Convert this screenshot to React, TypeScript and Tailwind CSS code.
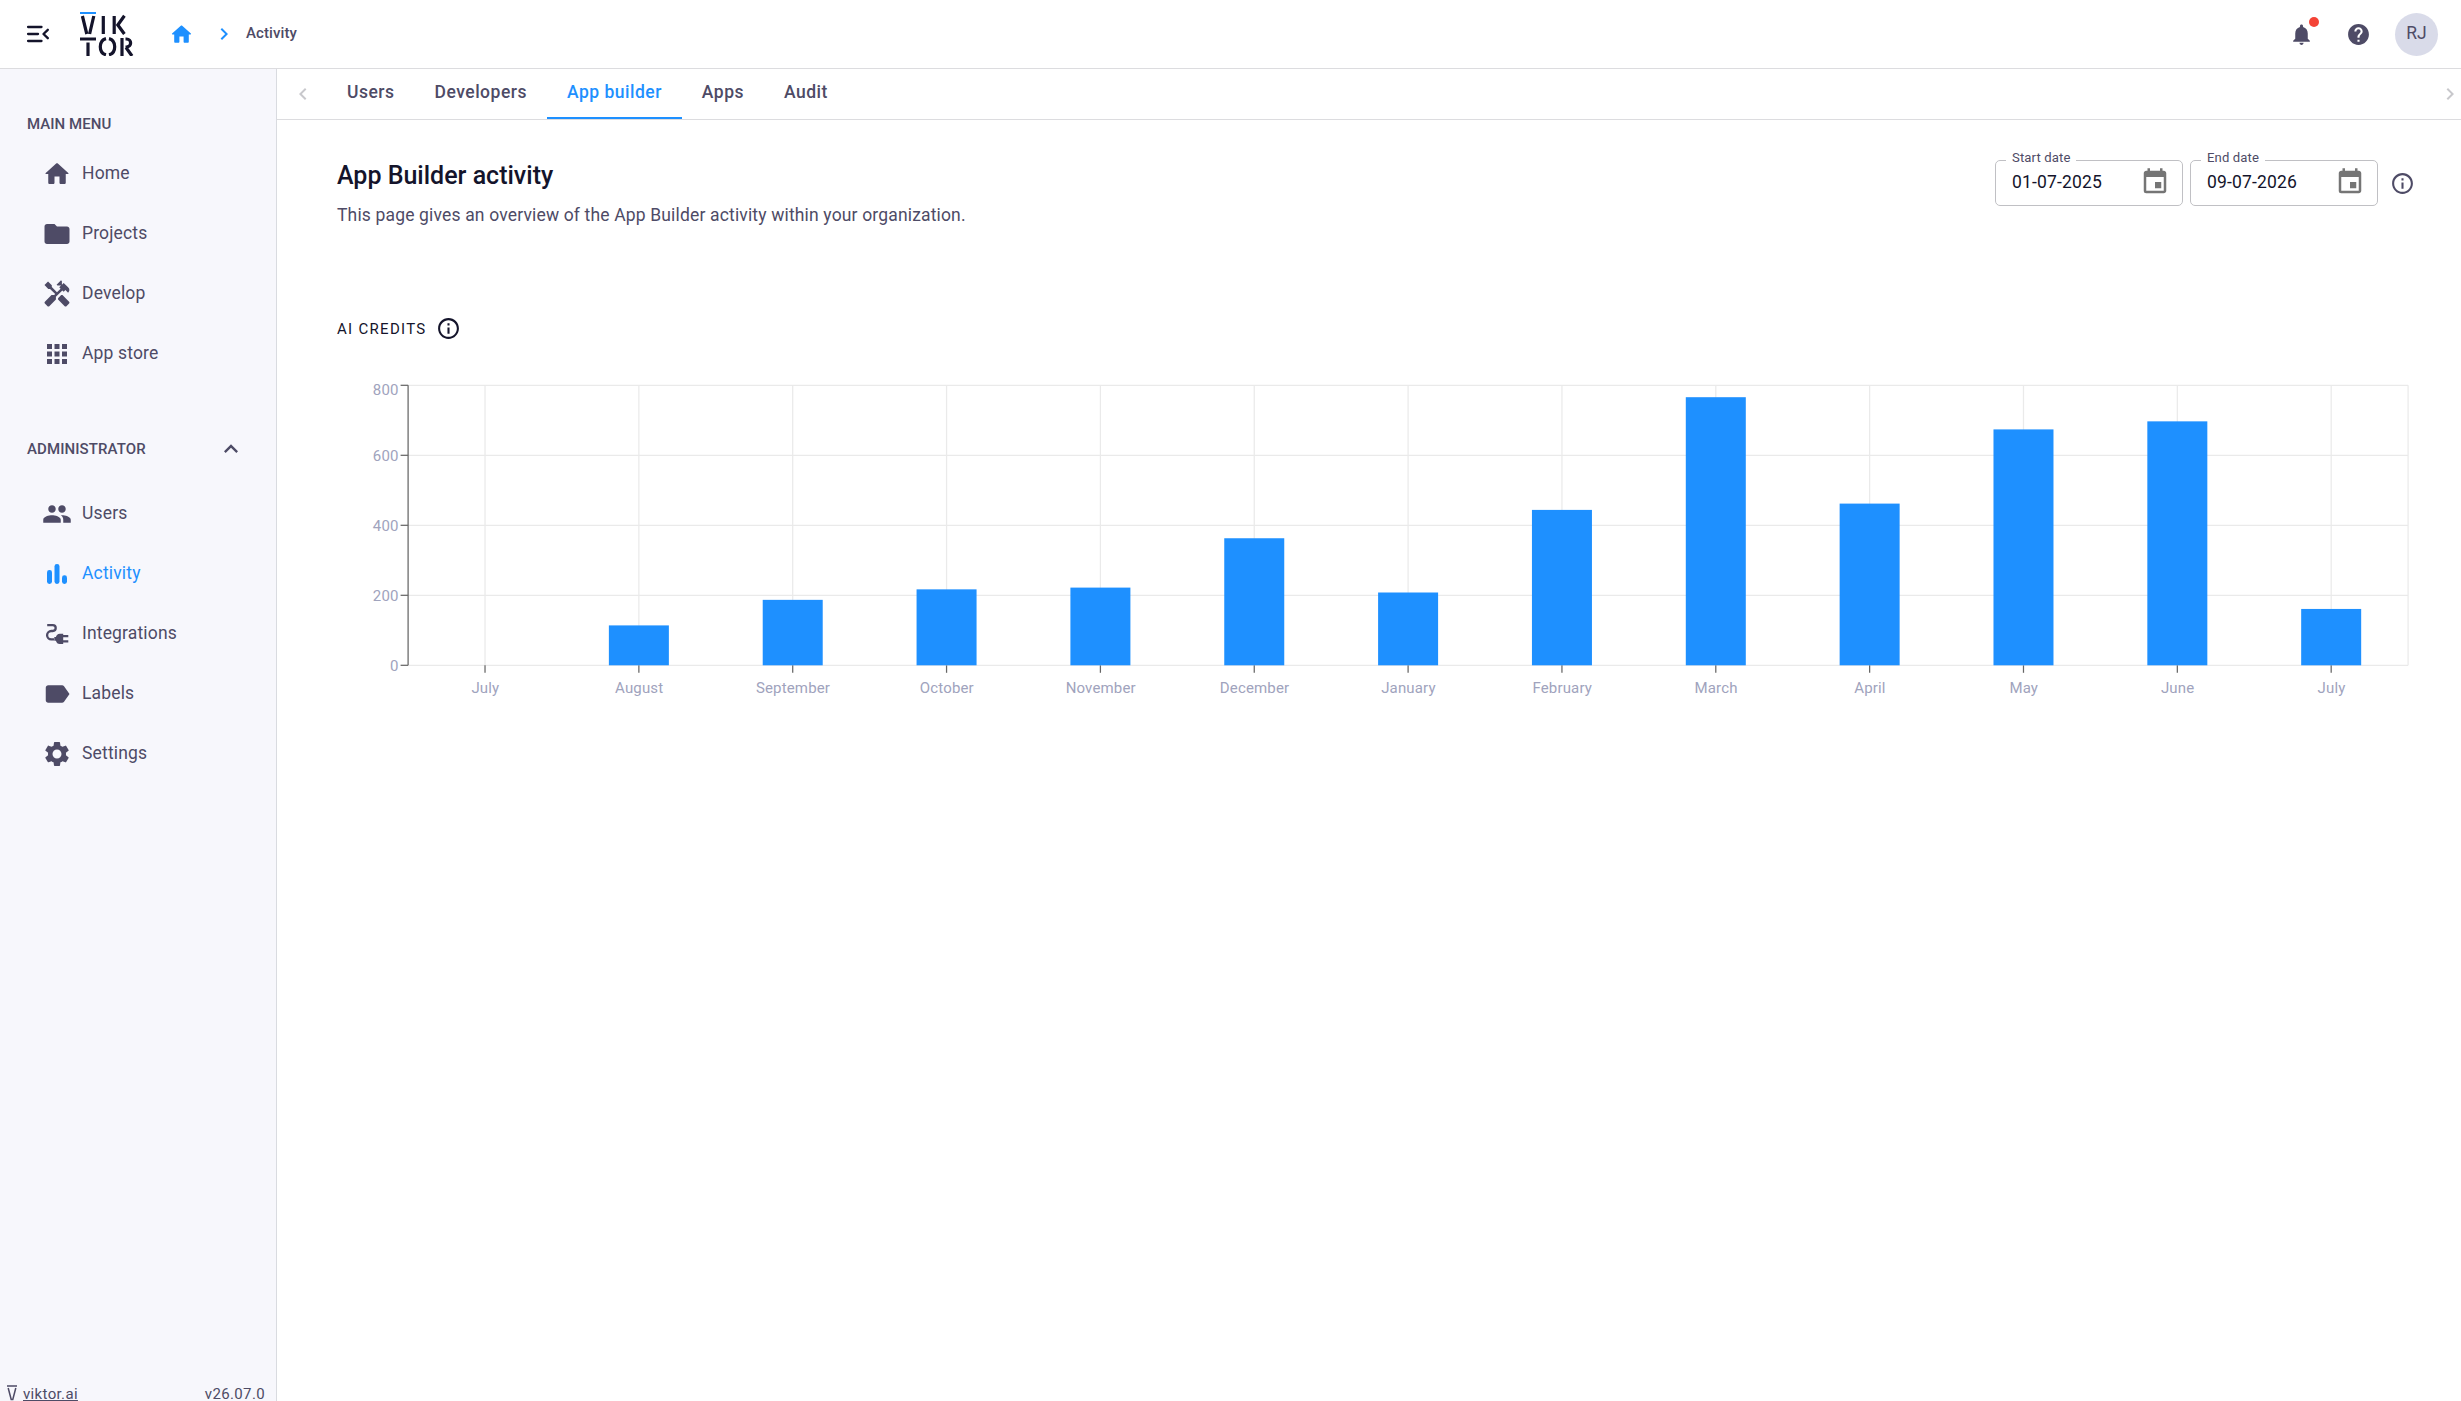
import React from "react";
import {
  MdApps,
  MdChevronLeft,
  MdChevronRight,
  MdEvent,
  MdExpandLess,
  MdFolder,
  MdHandyman,
  MdHelp,
  MdLabel,
  MdNotifications,
  MdOutlineInfo,
  MdPeople,
  MdSettings,
} from "react-icons/md";
import { clsx } from "clsx";

const MenuIcon = () => (
  <svg width="28" height="28" viewBox="0 0 24 24" fill="none" stroke="currentColor" strokeWidth="2" strokeLinecap="round" strokeLinejoin="round">
    <path d="M3.5 6H15M3.5 12H12M3.5 18H15M20.4 8.4 16.7 12l3.7 3.6" />
  </svg>
);

const HomeIcon = ({ size, className }: { size: number; className?: string }) => (
  <svg width={size} height={size} viewBox="0 0 24 24" fill="currentColor" className={className}>
    <path d="M10 19v-5h4v5c0 .55.45 1 1 1h3c.55 0 1-.45 1-1v-7h1.700c.46 0 .68-.57.33-.87L12.670 3.600c-.38-.34-.96-.34-1.340 0l-8.360 7.530c-.34.3-.13.87.33.87H5v7c0 .55.45 1 1 1h3c.55 0 1-.45 1-1z" />
  </svg>
);

const Logo = () => (
  <svg width="54" height="44" viewBox="0 0 54 44" fill="none" stroke="#14142b" strokeWidth="3.2">
    <path d="M0 1h16" stroke="#1e90ff" strokeWidth="2" />
    <path d="M2.4 4l4.4 18M13.8 4L9.6 22" />
    <path d="M23.3 4v18M34.2 4v18M44.4 3.8L37.8 13l6.6 9" />
    <path d="M0 27h16" strokeWidth="3" />
    <path d="M8 30.5V44" />
    <path d="M26 26.6c-7.6 2-7.6 14.4 0 16.2M29 26.6c7.6 2 7.6 14.4 0 16.2" />
    <path d="M42 26v18M45.5 27h1c5.5 0 5.5 8 0 8h-1M46 35.5l6 8.5" />
  </svg>
);

const ChartIcon = () => (
  <svg width="30" height="30" viewBox="0 0 30 30" fill="currentColor">
    <rect x="5" y="11" width="5" height="14" rx="2.4" />
    <rect x="12.5" y="5" width="5" height="20" rx="2.4" />
    <rect x="20" y="16.3" width="5" height="8.7" rx="2.4" />
  </svg>
);

const PlugIcon = () => (
  <svg width="30" height="30" viewBox="0 0 30 30" fill="none" stroke="currentColor" strokeWidth="2.3">
    <path d="M5.2 6.2h5.6a2.9 2.9 0 0 1 0 5.8H9.3a4.2 4.2 0 0 0 0 8.4h2.7" />
    <path d="M12.3 18h1.6c.5-2 1.8-3.3 3.9-3.3h3.4V25h-3.4c-2.1 0-3.4-1.3-3.9-3.3h-1.6z" fill="currentColor" stroke="none" />
    <path d="M21 17.2h5.3M21 22.4h5.3" />
  </svg>
);

interface NavItem {
  label: string;
  icon: React.ReactNode;
  active?: boolean;
}

const mainMenu: NavItem[] = [
  { label: "Home", icon: <HomeIcon size={30} /> },
  { label: "Projects", icon: <MdFolder size={30} /> },
  { label: "Develop", icon: <MdHandyman size={30} /> },
  { label: "App store", icon: <MdApps size={30} /> },
];

const adminMenu: NavItem[] = [
  { label: "Users", icon: <MdPeople size={30} /> },
  { label: "Activity", icon: <ChartIcon />, active: true },
  { label: "Integrations", icon: <PlugIcon /> },
  { label: "Labels", icon: <MdLabel size={30} /> },
  { label: "Settings", icon: <MdSettings size={30} /> },
];

const tabs = ["Users", "Developers", "App builder", "Apps", "Audit"];

const yTicks = [0, 200, 400, 600, 800];

const credits = [
  { month: "July", value: 0 },
  { month: "August", value: 114 },
  { month: "September", value: 187 },
  { month: "October", value: 217 },
  { month: "November", value: 222 },
  { month: "December", value: 363 },
  { month: "January", value: 208 },
  { month: "February", value: 444 },
  { month: "March", value: 766 },
  { month: "April", value: 462 },
  { month: "May", value: 674 },
  { month: "June", value: 697 },
  { month: "July", value: 161 },
];

const NavList = ({ items }: { items: NavItem[] }) => (
  <ul>
    {items.map((item) => (
      <li
        key={item.label}
        className={clsx(
          "flex h-[60px] items-center gap-[10px] pl-[42px] text-[17.5px] leading-6 tracking-[0.16px]",
          item.active && "text-[#1e90ff]"
        )}
      >
        <span className="flex w-[30px] justify-center">{item.icon}</span>
        <span className="pb-0.5">{item.label}</span>
      </li>
    ))}
  </ul>
);

const Header = () => (
  <header className="flex h-[69px] shrink-0 items-center border-b border-[#dcdcdf] pl-6 pr-[23px]">
    <div className="text-[#14142b]">
      <MenuIcon />
    </div>
    <div className="ml-7">
      <Logo />
    </div>
    <HomeIcon size={25} className="ml-[35px] text-[#1e90ff]" />
    <MdChevronRight size={24} className="ml-[18px] text-[#1e90ff]" />
    <span className="ml-2.5 pb-0.5 text-[15px] font-medium tracking-[0.1px]">Activity</span>
    <div className="ml-auto flex items-center">
      <div className="relative">
        <MdNotifications size={25} />
        <span className="absolute -top-[5px] left-[20px] size-2.5 rounded-full bg-[#f44336]" />
      </div>
      <MdHelp size={25} className="ml-8" />
      <div className="ml-6 flex size-[43px] items-center justify-center rounded-full bg-[#d9dbe9] pb-[3px] text-[17.5px] leading-6">
        RJ
      </div>
    </div>
  </header>
);

const Sidebar = () => (
  <aside className="flex w-[277px] shrink-0 flex-col border-r border-[#d9dbe0] bg-[#f7f7fc]">
    <h2 className="mt-[43px] pl-[27px] text-[15px] leading-6 font-medium tracking-[0.05px]">MAIN MENU</h2>
    <div className="mt-2">
      <NavList items={mainMenu} />
    </div>
    <div className="mt-[53px] flex h-6 items-center justify-between pl-[27px] pr-[31px]">
      <h2 className="text-[15px] leading-6 font-medium tracking-[0.1px]">ADMINISTRATOR</h2>
      <MdExpandLess size={28} />
    </div>
    <div className="mt-[23px]">
      <NavList items={adminMenu} />
    </div>
    <footer className="mt-auto flex h-4 items-start justify-between pl-[7px] pr-[11px] text-[15px] leading-[18px] tracking-[0.35px]">
      <div className="flex gap-1.5">
        <svg width="10" height="16" viewBox="0 0 10 16" fill="none" stroke="currentColor" strokeWidth="1.5">
          <path d="M0 1h10M1.2 3l3 11.500h1.600l3-11.500" />
        </svg>
        <span className="underline">viktor.ai</span>
      </div>
      <span>v26.07.0</span>
    </footer>
  </aside>
);

const Tabs = () => (
  <nav className="flex h-[51px] shrink-0 items-stretch border-b border-[#dcdcdf]">
    <MdChevronLeft size={24} className="ml-3.5 mt-[13px] text-[#c8c8cc]" />
    <div className="ml-3 flex">
      {tabs.map((tab) => (
        <div
          key={tab}
          className={clsx(
            "px-5 pt-[11px] text-[17.5px] leading-6 font-medium tracking-[0.5px]",
            tab === "App builder" && "border-b-2 border-[#1e90ff] text-[#1e90ff]"
          )}
        >
          {tab}
        </div>
      ))}
    </div>
    <MdChevronRight size={24} className="ml-auto -mr-px mt-[13px] text-[#c8c8cc]" />
  </nav>
);

const DateField = ({ label, value }: { label: string; value: string }) => (
  <fieldset className="flex h-[54px] w-[188px] items-start justify-between rounded-[5px] border border-[#c0c0c4] pr-3 pl-[10px]">
    <legend className="h-4 px-1.5 text-[13.125px] leading-3 tracking-[0.12px]">{label}</legend>
    <span className="pt-0.5 pl-1.5 text-[17.5px] leading-6 tracking-[0.16px] text-[#14142b]">{value}</span>
    <MdEvent size={30} className="-mt-px text-[#757575]" />
  </fieldset>
);

const CreditsChart = () => {
  const left = 71.1;
  const bottom = 290.3;
  const step = 2000 / credits.length;
  return (
    <svg width="2090" height="330" viewBox="0 0 2090 330" className="block" strokeWidth="1.25">
      {yTicks.map((tick) => (
        <line key={tick} x1={left} x2={left + 2000} y1={bottom - tick * 0.35} y2={bottom - tick * 0.35} stroke="#eaeaea" />
      ))}
      {credits.map((_, i) => (
        <line key={i} x1={left + step * (i + 0.5)} x2={left + step * (i + 0.5)} y1={bottom - 280} y2={bottom} stroke="#eaeaea" />
      ))}
      <line x1={left + 2000} x2={left + 2000} y1={bottom - 280} y2={bottom} stroke="#eaeaea" />
      <line x1={left} x2={left} y1={bottom - 280} y2={bottom} stroke="#666666" />
      {yTicks.map((tick) => (
        <g key={tick}>
          <line x1={left - 7.5} x2={left} y1={bottom - tick * 0.35} y2={bottom - tick * 0.35} stroke="#666666" />
          <text
            x={left - 9.5}
            y={bottom - tick * 0.35 + (tick === 800 ? 9.5 : 5.5)}
            textAnchor="end"
            fontSize="15"
            letterSpacing="0.15"
            fill="#a0a3bd"
            strokeWidth="0"
          >
            {tick}
          </text>
        </g>
      ))}
      {credits.map((item, i) => {
        const center = left + step * (i + 0.5);
        return (
          <g key={i}>
            <line x1={center} x2={center} y1={bottom} y2={bottom + 7.5} stroke="#666666" />
            <rect x={center - 30} y={bottom - item.value * 0.35} width="60" height={item.value * 0.35} fill="#1e90ff" strokeWidth="0" />
            <text x={center + 0.3} y={bottom + 27.7} textAnchor="middle" fontSize="15" letterSpacing="0.15" fill="#a0a3bd" strokeWidth="0">
              {item.month}
            </text>
          </g>
        );
      })}
    </svg>
  );
};

export default function App() {
  return (
    <div className="flex h-[1401px] w-full flex-col overflow-hidden bg-white font-[Roboto,sans-serif] text-[#4e4b66]">
      <Header />
      <div className="flex min-h-0 flex-1">
        <Sidebar />
        <main className="min-w-0 flex-1">
          <Tabs />
          <section className="flex h-[194px] justify-between pt-[38px] pr-[46px] pl-[60px]">
            <div>
              <h1 className="text-[25px] leading-9 font-medium text-[#14142b]">App Builder activity</h1>
              <p className="mt-[9px] text-[17.5px] leading-6 tracking-[0.16px]">
                This page gives an overview of the App Builder activity within your organization.
              </p>
            </div>
            <div className="-mt-1.5 flex items-start gap-[7px]">
              <DateField label="Start date" value="01-07-2025" />
              <DateField label="End date" value="09-07-2026" />
              <MdOutlineInfo size={25} className="mt-[19px] ml-[5px]" />
            </div>
          </section>
          <section className="pl-[60px] text-[#14142b]">
            <div className="flex h-7 items-center gap-[9px]">
              <h2 className="pt-0.5 text-[15px] leading-6 tracking-[1.3px]">AI CREDITS</h2>
              <MdOutlineInfo size={25} />
            </div>
            <div className="mt-[33px]">
              <CreditsChart />
            </div>
          </section>
        </main>
      </div>
    </div>
  );
}
